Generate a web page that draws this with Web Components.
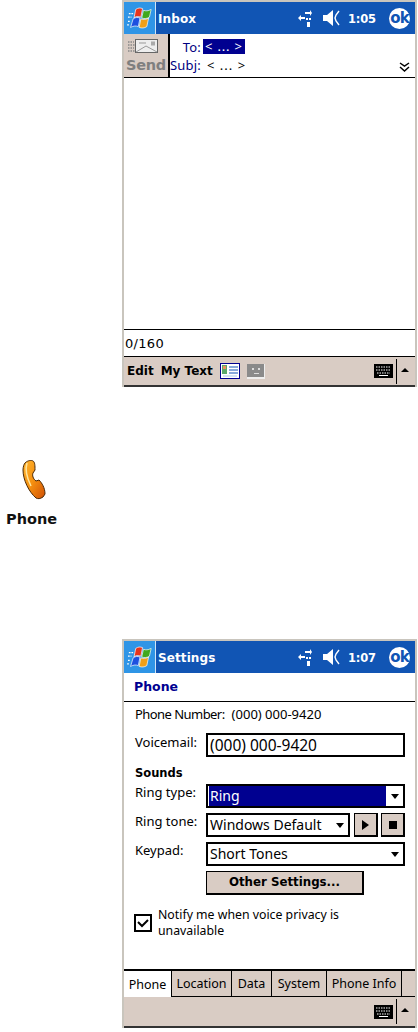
<!DOCTYPE html>
<html>
<head>
<meta charset="utf-8">
<title>Phone settings</title>
<style>
	html, body { margin:0; padding:0; background:#fff; }
	body { width:418px; height:1032px; overflow:hidden; font:13px "Noto Sans", sans-serif; color:#000; }
</style>
</head>
<body>

<ppc-screen label="Inbox" time="1:05" height="387">
	<message-head></message-head>
	<div style="flex:1"></div>
	<div style="height:26px;border:solid #000;border-width:1px 0;display:flex;align-items:center;padding-left:1px;font:13px 'DejaVu Sans',sans-serif;letter-spacing:.3px">0/160</div>
	<soft-bar menu="Edit,My Text" icons></soft-bar>
</ppc-screen>

<app-tile label="Phone"></app-tile>

<ppc-screen label="Settings" time="1:07" height="389">
	<phone-form></phone-form>
	<tab-strip tabs="Phone,Location,Data,System,Phone Info"></tab-strip>
	<soft-bar style="height:31px"></soft-bar>
</ppc-screen>

<script>
const LOGO = `<svg width="26" height="24" viewBox="0 0 30 28">
	<path d="M10 4c3-2 5-2 8-1l-2 10c-3-1-6-1-8 1z" fill="#e8341c" stroke="#fff" stroke-width=".8"/>
	<path d="M19 5c3 1 5 1 9-1l-2 9c-3 2-6 2-9 1z" fill="#3fa81e" stroke="#fff" stroke-width=".8"/>
	<path d="M7 15c3-2 5-2 8-1l-2 10c-3-1-5-1-9 1z" fill="#1d50e0" stroke="#fff" stroke-width=".8"/>
	<path d="M16 15c3 1 6 1 9-1l-2 10c-3 2-6 2-9 1z" fill="#f0a018" stroke="#fff" stroke-width=".8"/>
	<path d="M2 9h5M1 13h4M1 18h3M0 22h2" stroke="#fff" stroke-width="1.4" stroke-dasharray="2 1"/>
</svg>`

class PpcTitlebar extends HTMLElement {
	constructor() {
		super()
		this.attachShadow({mode:'open'})
		this.shadowRoot.innerHTML = `
<style>
	:host { display:flex; align-items:center; height:32px; background:#1155b4; color:#fff; font:bold 12px "DejaVu Sans", sans-serif; flex:none; }
	.start { width:31px; height:32px; background:#2f95e6; border-right:1px solid #cfe4f7; display:flex; align-items:center; justify-content:center; flex:none; }
	.title { margin-left:2px; flex:1; letter-spacing:.1px; padding-top:1px; }
	.sync { margin-right:11px; }
	.vol { margin-right:7px; }
	.time { width:27px; margin-right:14px; white-space:nowrap; font-size:11.5px; letter-spacing:-.2px; padding-top:1px; }
	.ok { width:21px; height:21px; margin-right:5px; border-radius:50%; background:#fff; color:#1155b4; font:bold 15px/20px "DejaVu Sans", sans-serif; text-align:center; letter-spacing:-1px; }
</style>
<div class="start">${LOGO}</div>
<div class="title"></div>
<svg class="sync" width="14" height="18" viewBox="0 0 14 18" fill="#fff">
	<path d="M7 3h5V1l2 3-2 3V5H7zM0 9l3-3v2h4v2H3v2zM8 9h2v2H8zM11 9h2v2h-2zM9 13h3v5H9z"/>
</svg>
<svg class="vol" width="18" height="16" viewBox="0 0 18 16" fill="none">
	<path d="M0 5h4l6-5v16l-6-5H0z" fill="#fff"/>
	<path d="M16 1l-3 4-1 3 1 3 3 4" stroke="#fff" stroke-width="1.4"/>
</svg>
<div class="time"></div>
<div class="ok">ok</div>`
	}
}
customElements.define('ppc-titlebar', PpcTitlebar)

class PpcScreen extends HTMLElement {
	constructor() {
		super()
		this.attachShadow({mode:'open'})
		this.shadowRoot.innerHTML = `
<style>
	:host { display:flex; flex-direction:column; box-sizing:border-box; width:295px; margin-left:122px; border:solid #c9c5bd; border-width:2px 2px 0 2px; background:#fff; }
	.body { flex:1; display:flex; flex-direction:column; min-height:0; }
</style>
<ppc-titlebar></ppc-titlebar>
<div class="body"><slot></slot></div>`
		const bar = this.shadowRoot.querySelector('ppc-titlebar')
		bar.shadowRoot.querySelector('.title').textContent = this.getAttribute('label')
		bar.shadowRoot.querySelector('.time').textContent = this.getAttribute('time')
		this.style.height = this.getAttribute('height') + 'px'
	}
}
customElements.define('ppc-screen', PpcScreen)

class MessageHead extends HTMLElement {
	constructor() {
		super()
		this.attachShadow({mode:'open'})
		this.shadowRoot.innerHTML = `
<style>
	:host { display:flex; height:44px; flex:none; border-bottom:1px solid #000; box-sizing:border-box; font:13px "Noto Sans", sans-serif; }
	.send { width:44px; background:#d9ccc4; border-right:2px solid #000; display:flex; flex-direction:column; align-items:flex-start; flex:none; color:#7f7f7f; font:bold 14.5px "DejaVu Sans", sans-serif; }
	.send svg { margin:4px 0 0 4px; }
	.send span { margin:2px 0 0 2px; line-height:18px; letter-spacing:-.3px; }
	.fields { flex:1; display:flex; flex-direction:column; position:relative; color:#000080; }
	.row { display:flex; height:18px; align-items:center; }
	.row:first-child { margin-top:3px; height:19px; }
	.key { width:31px; text-align:right; margin-right:2px; flex:none; white-space:nowrap; letter-spacing:.2px; }
	.val { color:#000; margin-left:4px; letter-spacing:1px; }
	.sel { background:#000090; color:#fff; margin-left:0; padding:0 2px; height:15px; line-height:15px; letter-spacing:.8px; }
	.more { position:absolute; right:5px; bottom:5px; }
</style>
<div class="send">
	<svg width="32" height="16" viewBox="0 0 32 16">
		<path d="M0 4h6M0 7h7M0 10h6M0 13h7" stroke="#888" stroke-width="1.5" stroke-dasharray="1.5 1"/>
		<rect x="7.500" y="1.500" width="22" height="13" fill="#eee" stroke="#666"/>
		<path d="M8 14l10-6 11 6M11 5h7" fill="none" stroke="#999"/>
		<rect x="23" y="3.500" width="4" height="4" fill="#aaa"/>
	</svg>
	<span>Send</span>
</div>
<div class="fields">
	<div class="row"><span class="key">To:</span><span class="val sel">&lt; ... &gt;</span></div>
	<div class="row"><span class="key">Subj:</span><span class="val">&lt; ... &gt;</span></div>
	<svg class="more" width="11" height="10" viewBox="0 0 11 10" fill="none" stroke="#000" stroke-width="1.500">
		<path d="M1 1l4.500 3L10 1M1 5l4.500 4L10 5"/>
	</svg>
</div>`
	}
}
customElements.define('message-head', MessageHead)

class SoftBar extends HTMLElement {
	constructor() {
		super()
		this.attachShadow({mode:'open'})
		const menu = (this.getAttribute('menu') || '').split(',').filter(Boolean)
		const items = menu.map(m => `<span class="menu">${m}</span>`).join('')
		const icons = this.hasAttribute('icons') ? `
<svg class="ic" width="20" height="16" viewBox="0 0 20 16">
	<rect x=".5" y=".5" width="19" height="15" fill="#fff" stroke="#000090"/>
	<rect x="2" y="2" width="5" height="9" fill="#5ba86a"/><rect x="3" y="3" width="3" height="3" fill="#e89060"/>
	<path d="M9 4h9M9 7h9M9 10h9" stroke="#1155b4"/><path d="M3 13h14" stroke="#a8c8e8"/>
</svg>
<svg class="ic2" width="18" height="15" viewBox="0 0 18 15">
	<rect x="0" y="0" width="18" height="15" fill="#eee"/>
	<rect x="0" y="0" width="17" height="13" fill="#8a8a8a"/>
	<path d="M5 4h2v2H5zM11 4h2v2h-2zM7 9h5v1H7z" fill="#ddd"/>
</svg>` : ''
		this.shadowRoot.innerHTML = `
<style>
	:host { display:flex; align-items:center; height:30px; flex:none; background:#d9ccc4; box-sizing:border-box; border-bottom:2px solid #333; font:bold 12px "DejaVu Sans", sans-serif; color:#000; padding-left:3px; }
	.menu { margin-right:7px; white-space:nowrap; }
	.ic { margin:0 7px 0 0; }
	.ic2 { margin:0; }
	.grow { flex:1; }
	.kb { margin-right:3px; }
	.sep { width:1px; height:25px; background:#000; margin-right:4px; }
	.up { width:0; height:0; border:4px solid transparent; border-top:0; border-bottom:4px solid #000; margin-right:6px; margin-bottom:3px; }
</style>
${items}${icons}
<div class="grow"></div>
<svg class="kb" width="19" height="14" viewBox="0 0 19 14">
	<rect width="19" height="14" fill="#000"/>
	<path d="M2 3h15M2 6h15M3 9h13" stroke="#fff" stroke-dasharray="1.500 1"/>
	<path d="M5 11.500h9" stroke="#fff"/>
</svg>
<div class="sep"></div>
<div class="up"></div>`
	}
}
customElements.define('soft-bar', SoftBar)

class AppTile extends HTMLElement {
	constructor() {
		super()
		this.attachShadow({mode:'open'})
		this.shadowRoot.innerHTML = `
<style>
	:host { display:flex; flex-direction:column; align-items:flex-start; box-sizing:border-box; height:252px; padding:73px 0 0 6px; font:bold 14.5px "DejaVu Sans", sans-serif; color:#111; }
	svg { margin-left:16px; }
	span { margin-top:10px; line-height:16px; }
</style>
<svg width="24" height="41" viewBox="0 0 24 41">
	<defs>
		<linearGradient id="g" x1="0" y1="0" x2="1" y2="1">
			<stop offset="0" stop-color="#ffb52e"/><stop offset=".5" stop-color="#f59010"/><stop offset="1" stop-color="#d04f05"/>
		</linearGradient>
	</defs>
	<path d="M3 3C6 0 10 0 11 1c2 1 2 5 2 9l-2 3c-1 2 0 6 3 8l3-1c3 3 6 8 6 14l-2 3c-3 2-5 2-7 1C7 32 1 20 1 10 1 7 2 4 3 3z" fill="url(#g)" stroke="#4a2806"/>
	<path d="M5 3c-2 6 0 15 4 23" fill="none" stroke="#ffe6a0" stroke-width="1.500"/>
</svg>
<span></span>`
		this.shadowRoot.querySelector('span').textContent = this.getAttribute('label')
	}
}
customElements.define('app-tile', AppTile)

class DropList extends HTMLElement {
	constructor() {
		super()
		this.attachShadow({mode:'open'})
		this.shadowRoot.innerHTML = `
<style>
	:host { display:flex; align-items:center; box-sizing:border-box; height:24px; border:2px solid #000; background:#fff; font:14px "Noto Sans", sans-serif; }
	.text { flex:1; height:20px; line-height:20px; padding-left:1px; margin-left:1px; margin-right:5px; white-space:nowrap; overflow:hidden; }
	:host([selected]) .text { background:#000090; color:#fff; }
	.arrow { width:0; height:0; border:4px solid transparent; border-bottom:0; border-top:5px solid #000; margin-right:4px; flex:none; }
</style>
<div class="text"><slot></slot></div>
<div class="arrow"></div>`
	}
}
customElements.define('drop-list', DropList)

class PhoneForm extends HTMLElement {
	constructor() {
		super()
		this.attachShadow({mode:'open'})
		this.shadowRoot.innerHTML = `
<style>
	:host { display:flex; flex-direction:column; flex:1; min-height:0; font:13px "Noto Sans", sans-serif; color:#000; }
	.head { height:29px; box-sizing:border-box; border-bottom:1px solid #000; padding:6px 0 0 10px; font:bold 12.5px "DejaVu Sans", sans-serif; color:#000090; flex:none; }
	.pane { padding:0 10px 0 11px; display:flex; flex-direction:column; }
	.number { display:flex; height:24px; align-items:center; }
	.number span:first-child { margin-right:7px; letter-spacing:-.55px; }
	.row { display:flex; height:24px; margin-bottom:5px; }
	.row > span { width:71px; flex:none; line-height:16px; white-space:nowrap; }
	.row > :nth-child(2) { flex:1; min-width:0; }
	.box { box-sizing:border-box; border:2px solid #000; height:24px; font:15.5px/20px "Noto Sans", sans-serif; padding-left:2px; }
	.voice { margin-top:7px; margin-bottom:7px; }
	.voice > span { padding-top:1px; }
	.sounds { font:bold 11.5px/18px "DejaVu Sans", sans-serif; height:18px; margin-bottom:2px; }
	.btn { box-sizing:border-box; width:24px; height:24px; background:#d9ccc4; border:1px solid #000; border-right-width:2px; border-bottom-width:2px; display:flex; align-items:center; justify-content:center; flex:none; margin-left:4px; }
	.btn + .btn { margin-left:3px; }
	.play { width:0; height:0; border:5px solid transparent; border-right:0; border-left:7px solid #000; }
	.stop { width:8px; height:8px; background:#000; }
	.other { margin-left:71px; width:158px; height:24px; box-sizing:border-box; background:#d9ccc4; border:1px solid #000; border-right-width:2px; border-bottom-width:2px; text-align:center; font:bold 11.8px/21px "DejaVu Sans", sans-serif; }
	.check { display:flex; margin:12px 0 0 -1px; }
	.cb { width:18px; height:18px; box-sizing:border-box; border:2px solid #000; flex:none; margin:7px 6px 0 0; display:flex; align-items:center; justify-content:center; }
	.note { line-height:16px; font-size:12.3px; }
</style>
<div class="head">Phone</div>
<div class="pane">
	<div class="number"><span>Phone Number:</span><span>(000) 000-9420</span></div>
	<div class="row voice"><span>Voicemail:</span><div class="box">(000) 000-9420</div></div>
	<div class="sounds">Sounds</div>
	<div class="row"><span>Ring type:</span><drop-list selected>Ring</drop-list></div>
	<div class="row"><span>Ring tone:</span><drop-list>Windows Default</drop-list><div class="btn"><div class="play"></div></div><div class="btn"><div class="stop"></div></div></div>
	<div class="row"><span>Keypad:</span><drop-list>Short Tones</drop-list></div>
	<div class="other">Other Settings...</div>
	<div class="check">
		<div class="cb"><svg width="12" height="10" viewBox="0 0 12 10" fill="none" stroke="#000" stroke-width="2"><path d="M1 4l4 4 6-6"/></svg></div>
		<div class="note">Notify me when voice privacy is unavailable</div>
	</div>
</div>`
	}
}
customElements.define('phone-form', PhoneForm)

class TabStrip extends HTMLElement {
	constructor() {
		super()
		this.attachShadow({mode:'open'})
		const widths = [48, 60, 40, 55, 75]
		const tabs = this.getAttribute('tabs').split(',')
		this.shadowRoot.innerHTML = `
<style>
	:host { display:flex; height:28px; flex:none; box-sizing:border-box; border-top:2px solid #000; background:#d9ccc4; font:12.5px "Noto Sans", sans-serif; margin-top:auto; }
	.tab { box-sizing:border-box; display:flex; align-items:center; justify-content:center; border-right:1px solid #000; border-bottom:1px solid #000; white-space:nowrap; }
	.tab.on { background:#fff; border-bottom:0; }
	.rest { flex:1; border-bottom:1px solid #000; }
</style>
${tabs.map((t, i) => `<div class="tab${i?'':' on'}" style="width:${widths[i]}px">${t}</div>`).join('')}
<div class="rest"></div>`
	}
}
customElements.define('tab-strip', TabStrip)
</script>
</body>
</html>
